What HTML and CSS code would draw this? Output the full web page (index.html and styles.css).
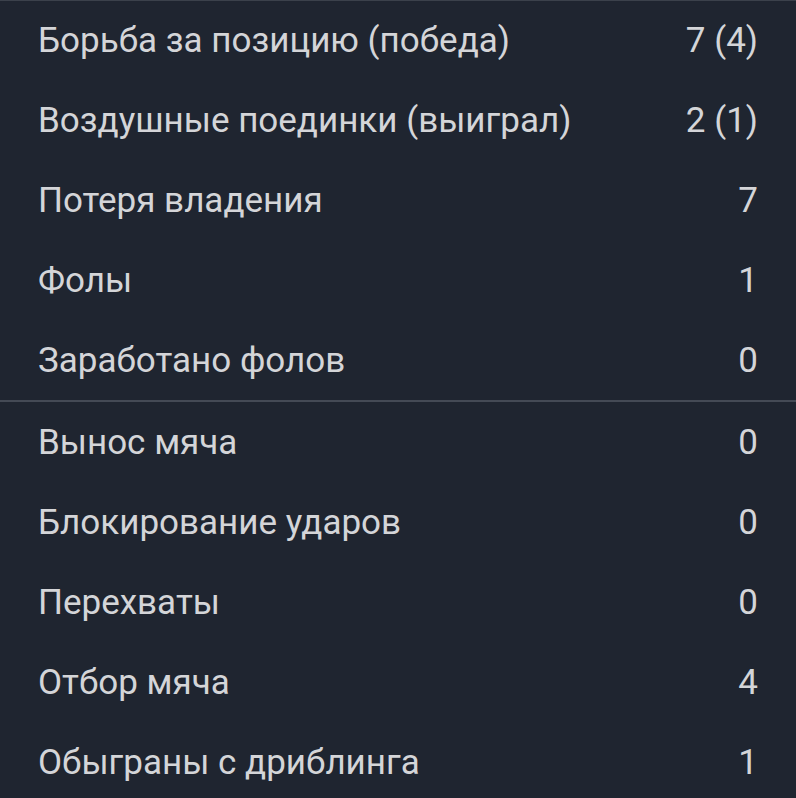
FILE: index.html
```html
<!DOCTYPE html>
<html lang="ru">
<head>
<meta charset="utf-8">
<link rel="stylesheet" href="styles.css">
</head>
<body>
<div class="panel">
  <div class="section">
    <div class="row"><span class="label">Борьба за позицию (победа)</span><span class="value">7 (4)</span></div>
    <div class="row"><span class="label">Воздушные поединки (выиграл)</span><span class="value">2 (1)</span></div>
    <div class="row"><span class="label">Потеря владения</span><span class="value">7</span></div>
    <div class="row"><span class="label">Фолы</span><span class="value">1</span></div>
    <div class="row"><span class="label">Заработано фолов</span><span class="value">0</span></div>
  </div>
  <div class="section">
    <div class="row"><span class="label">Вынос мяча</span><span class="value">0</span></div>
    <div class="row"><span class="label">Блокирование ударов</span><span class="value">0</span></div>
    <div class="row"><span class="label">Перехваты</span><span class="value">0</span></div>
    <div class="row"><span class="label">Отбор мяча</span><span class="value">4</span></div>
    <div class="row"><span class="label">Обыграны с дриблинга</span><span class="value">1</span></div>
  </div>
</div>
</body>
</html>
```

FILE: styles.css
```css
html, body {
  margin: 0;
  padding: 0;
  background: #1f2530;
}
.panel {
  width: 796px;
  height: 798px;
  background: #1f2530;
  border-top: 1px solid #3b414b;
  box-sizing: border-box;
  font-family: Roboto, "Noto Sans", sans-serif;
  color: #d4d5d8;
  font-size: 35px;
}
.section + .section {
  border-top: 2px solid #444a55;
}
.row {
  height: 80px;
  display: flex;
  align-items: center;
  justify-content: space-between;
  padding: 0 38px 0 38px;
}
.section:first-child .row:first-child {
  height: 79px;
}
```
